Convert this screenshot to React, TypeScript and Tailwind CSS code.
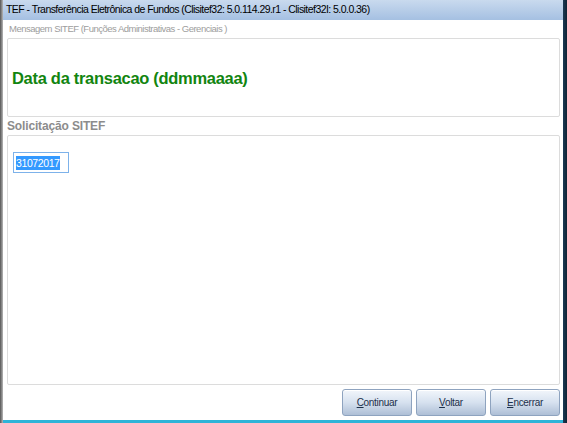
import React from 'react';

const WinButton: React.FC<{ accel: string; rest: string }> = ({ accel, rest }) => (
  <button className="w-[70px] h-[27px] rounded-[3px] border border-[#8ea3bf] bg-gradient-to-b from-[#f2f6fb] via-[#d6e1ef] to-[#aebfd6] text-[10px] tracking-[-0.3px] text-[#1c2f4a] shadow-[inset_0_1px_0_#ffffff]">
    <span className="underline">{accel}</span>
    {rest}
  </button>
);

const App: React.FC = () => {
  return (
    <div className="w-[567px] h-[423px] bg-[#2d4f6a] flex font-['Liberation_Sans',Arial,sans-serif]">
      <div className="w-[3px] bg-gradient-to-r from-[#555] to-[#b8b8b8]" />
      <div className="w-[560px] flex flex-col">
        {/* Title bar */}
        <div className="h-[20px] bg-gradient-to-b from-[#c9daee] to-[#a5c0e2] flex items-center pl-[3px] text-[10.5px] tracking-[-0.55px] text-black whitespace-nowrap">
          TEF - Transferência Eletrônica de Fundos (Clisitef32: 5.0.114.29.r1 - Clisitef32I: 5.0.0.36)
        </div>
        <div className="flex-1 bg-white flex flex-col pl-[4px] pr-[3px]">
          <div className="h-[18px] flex items-center pl-[2px] text-[9.5px] tracking-[-0.5px] text-[#9d9d9d] whitespace-nowrap">
            Mensagem SITEF (Funções Administrativas - Gerenciais )
          </div>
          <div className="h-[79px] border border-[#dcdcdc] rounded-[2px] flex items-center pl-[4px] pt-[1px]">
            <span className="text-[16.5px] font-bold text-[#12850f] tracking-[-0.3px]">Data da transacao (ddmmaaaa)</span>
          </div>
          <div className="h-[18px] flex items-center text-[12px] font-bold text-[#8c8c8c] tracking-[-0.15px]">
            Solicitação SITEF
          </div>
          <div className="h-[250px] border border-[#dcdcdc] rounded-[2px] pl-[5px] pt-[16px]">
            <div className="w-[56px] h-[21px] border border-[#7db2ea] flex items-center pl-[2px]">
              <span className="bg-[#3399ff] text-white text-[10.5px] leading-[14px] tracking-[-0.4px]">31072017</span>
            </div>
          </div>
          <div className="flex justify-end gap-[4px] pt-[4px]">
            <WinButton accel="C" rest="ontinuar" />
            <WinButton accel="V" rest="oltar" />
            <WinButton accel="E" rest="ncerrar" />
          </div>
          <div className="flex-1" />
        </div>
        <div className="h-[3px] bg-[#2fb4d8]" />
      </div>
      <div className="w-[4px] bg-gradient-to-r from-[#1b3a55] to-[#0e2233]" />
    </div>
  );
};

export default App;
